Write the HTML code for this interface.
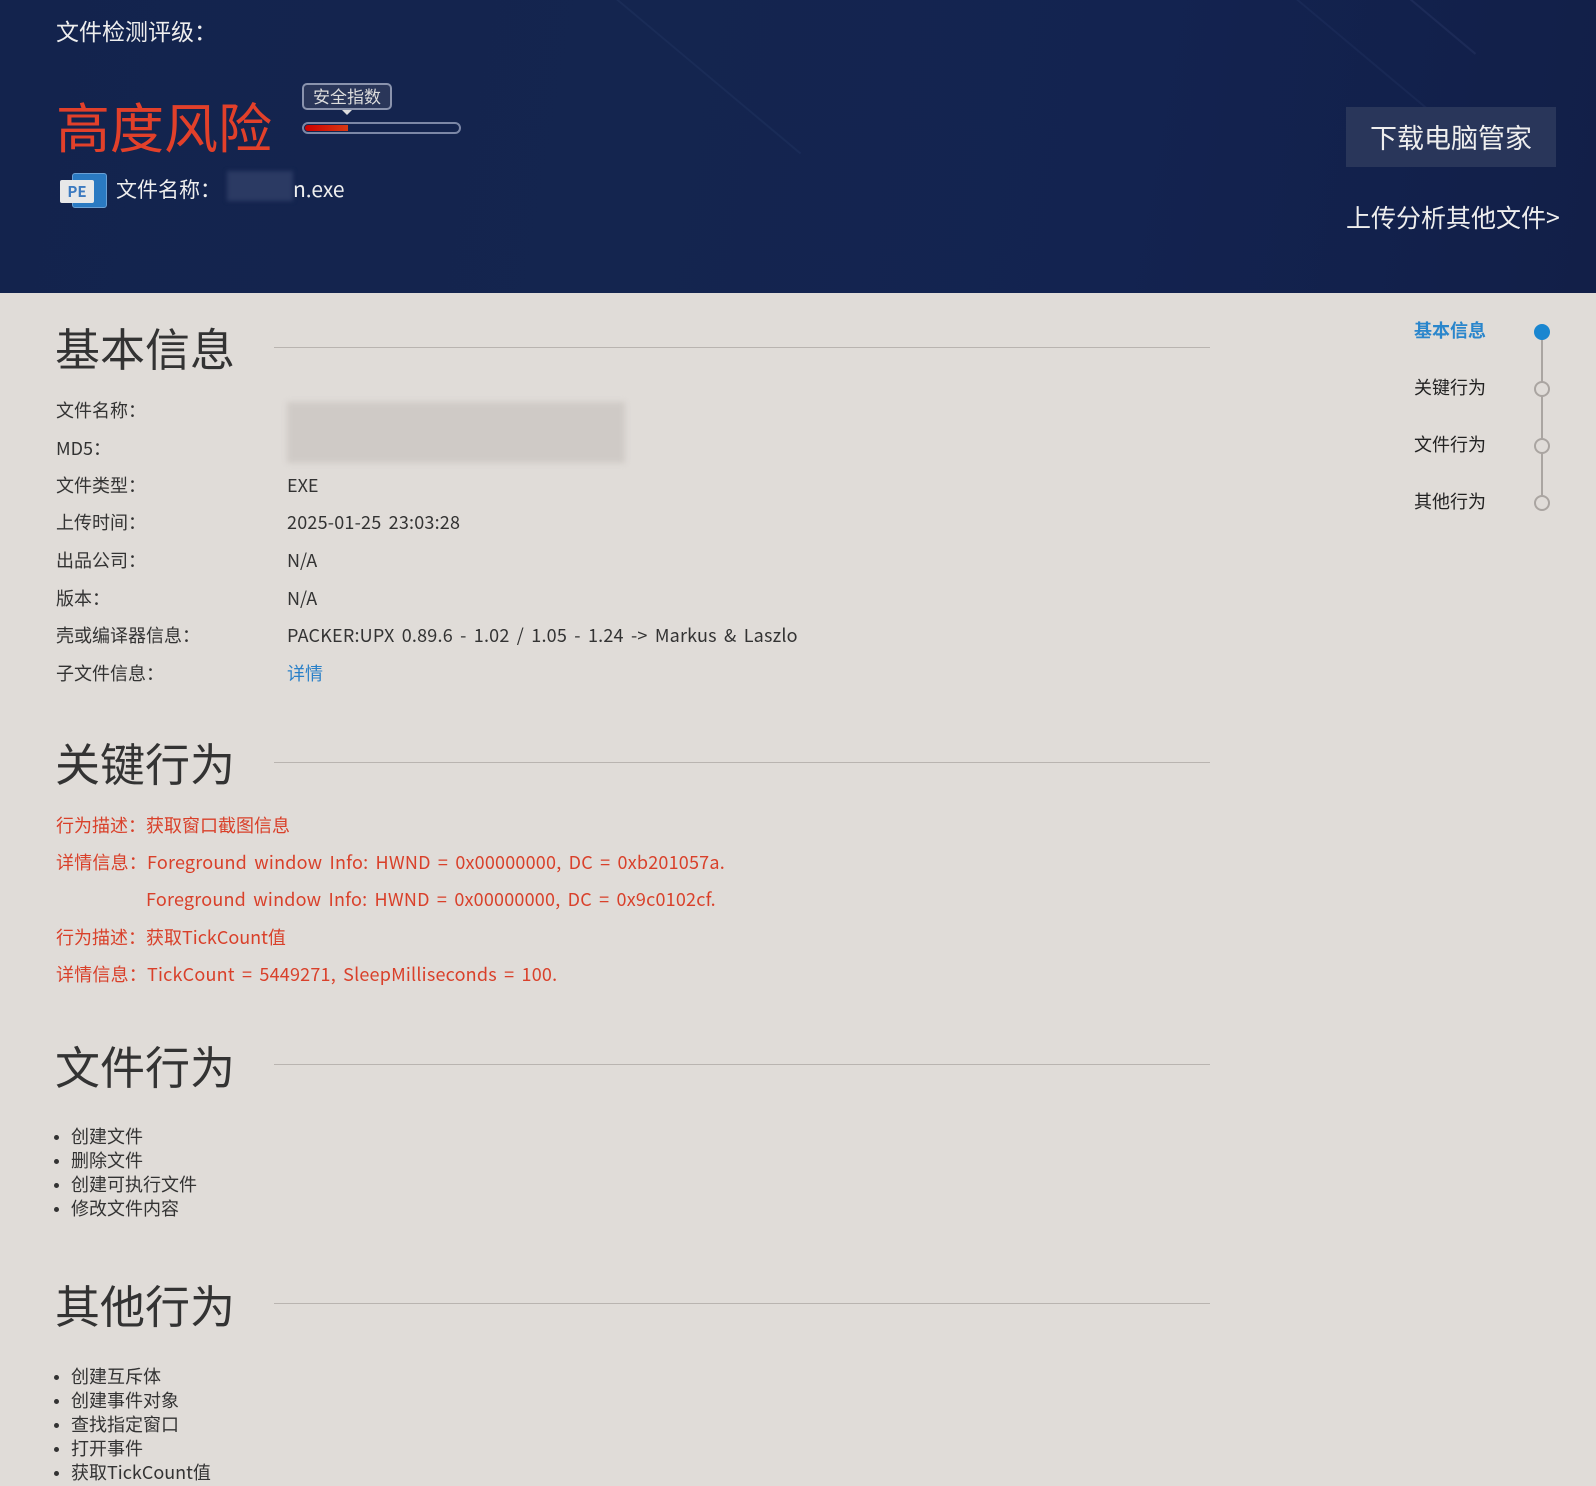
<!DOCTYPE html>
<html><head><meta charset="utf-8"><style>
*{margin:0;padding:0;box-sizing:border-box}
body{width:1596px;height:1486px;overflow:hidden;background:#e0dcd8;font-family:"Noto Sans CJK SC","Liberation Sans",sans-serif;color:#333;position:relative}
.a{position:absolute;white-space:nowrap;line-height:1}
#hd{position:absolute;left:0;top:0;width:1596px;height:293px;background:linear-gradient(100deg,#13234d 0%,#14254f 40%,#132350 70%,#121f48 100%);overflow:hidden}
.h2{font-size:45px;color:#333}
.ln{position:absolute;left:274px;width:936px;height:1px;background:#b9b4b0}
.r{font-size:18px;color:#333}
.red{color:#d9402a;font-size:18px}
.ws{word-spacing:3px;letter-spacing:0.2px}
ul{position:absolute;left:52px;list-style:none;font-size:18px;color:#333}
ul li{height:24px;line-height:24px;padding-left:19px;position:relative}
ul li:before{content:"";position:absolute;left:2px;top:11px;width:5px;height:5px;border-radius:50%;background:#333}
.dot{position:absolute;left:1534px;width:16px;height:16px;border-radius:50%;border:2px solid #aaa5a1;background:#e0dcd8}
</style></head><body>
<div id="hd">
<div class="a" style="left:700px;top:-60px;width:2px;height:260px;background:rgba(120,140,200,.07);transform:rotate(-50deg)"></div>
<div class="a" style="left:1380px;top:-80px;width:2px;height:300px;background:rgba(120,140,200,.07);transform:rotate(-50deg)"></div>
<div class="a" style="left:1440px;top:-20px;width:2px;height:90px;background:rgba(120,140,200,.1);transform:rotate(-50deg)"></div>
<div class="a" style="left:56px;top:19px;font-size:23px;color:#eee">文件检测评级：</div>
<div class="a" style="left:56px;top:98px;font-size:54px;color:#e2402a">高度风险</div>
<div class="a" style="left:302px;top:83px;width:90px;height:27px;border:2px solid #8a93ad;border-radius:5px;background:#2a3659;color:#ddd;font-size:17px;line-height:22px;text-align:center">安全指数</div>
<div class="a" style="left:342px;top:110px;width:0;height:0;border-left:5px solid transparent;border-right:5px solid transparent;border-top:5px solid #ddd"></div>
<div class="a" style="left:302px;top:122px;width:159px;height:12px;border:2px solid #7c87a6;border-radius:6px"></div>
<div class="a" style="left:305px;top:125px;width:43px;height:6px;background:linear-gradient(90deg,#c00,#d83a14);border-radius:3px 0 0 3px"></div>
<div class="a" style="left:72px;top:173px;width:35px;height:35px;background:#2a7ac2;border:1px solid #6aa0d5;border-radius:3px"></div>
<div class="a" style="left:60px;top:180px;width:34px;height:23px;background:#e8e8e8;border-radius:2px;color:#3c7ac0;font-weight:bold;font-size:15px;line-height:23px;text-align:center">PE</div>
<div class="a" style="left:116px;top:179px;font-size:21px;color:#eee">文件名称：</div>
<div class="a" style="left:227px;top:171px;width:66px;height:30px;background:#2b3a63;filter:blur(2px)"></div>
<div class="a" style="left:293px;top:179px;font-size:21px;color:#eee">n.exe</div>
<div class="a" style="left:1346px;top:107px;width:210px;height:60px;background:#29365a;color:#eee;font-size:27px;line-height:60px;text-align:center">下载电脑管家</div>
<div class="a" style="left:1346px;top:205px;font-size:25px;color:#eee">上传分析其他文件&gt;</div>
</div>

<div class="a h2" style="left:55px;top:324px">基本信息</div>
<div class="ln" style="top:347px"></div>
<div class="a r" style="left:56px;top:401px">文件名称：</div>
<div class="a r" style="left:56px;top:439px">MD5：</div>
<div class="a r" style="left:56px;top:476px">文件类型：</div>
<div class="a r" style="left:56px;top:513px">上传时间：</div>
<div class="a r" style="left:56px;top:551px">出品公司：</div>
<div class="a r" style="left:56px;top:589px">版本：</div>
<div class="a r" style="left:56px;top:626px">壳或编译器信息：</div>
<div class="a r" style="left:56px;top:664px">子文件信息：</div>
<div class="a" style="left:287px;top:402px;width:338px;height:61px;background:#cfcac6;filter:blur(3px)"></div>
<div class="a r" style="left:287px;top:476px">EXE</div>
<div class="a r ws" style="left:287px;top:513px">2025-01-25 23:03:28</div>
<div class="a r" style="left:287px;top:551px">N/A</div>
<div class="a r" style="left:287px;top:589px">N/A</div>
<div class="a r ws" style="left:287px;top:626px">PACKER:UPX 0.89.6 - 1.02 / 1.05 - 1.24 -&gt; Markus &amp; Laszlo</div>
<div class="a r" style="left:287px;top:664px;color:#2a80c8">详情</div>

<div class="a h2" style="left:55px;top:739px">关键行为</div>
<div class="ln" style="top:762px"></div>
<div class="a red" style="left:56px;top:816px">行为描述：获取窗口截图信息</div>
<div class="a red ws" style="left:56px;top:853px">详情信息：Foreground window Info: HWND = 0x00000000, DC = 0xb201057a.</div>
<div class="a red ws" style="left:146px;top:890px">Foreground window Info: HWND = 0x00000000, DC = 0x9c0102cf.</div>
<div class="a red" style="left:56px;top:928px">行为描述：获取TickCount值</div>
<div class="a red ws" style="left:56px;top:965px">详情信息：TickCount = 5449271, SleepMilliseconds = 100.</div>

<div class="a h2" style="left:55px;top:1042px">文件行为</div>
<div class="ln" style="top:1064px"></div>
<ul style="top:1124px"><li>创建文件</li><li>删除文件</li><li>创建可执行文件</li><li>修改文件内容</li></ul>

<div class="a h2" style="left:55px;top:1281px">其他行为</div>
<div class="ln" style="top:1303px"></div>
<ul style="top:1364px"><li>创建互斥体</li><li>创建事件对象</li><li>查找指定窗口</li><li>打开事件</li><li>获取TickCount值</li></ul>

<div class="a" style="left:1541px;top:332px;width:2px;height:170px;background:#aaa5a1"></div>
<div class="dot" style="top:324px;background:#1a86d0;border-color:#1a86d0"></div>
<div class="dot" style="top:381px"></div>
<div class="dot" style="top:438px"></div>
<div class="dot" style="top:495px"></div>
<div class="a" style="left:1414px;top:321px;font-size:18px;color:#2a86cc;font-weight:bold">基本信息</div>
<div class="a" style="left:1414px;top:378px;font-size:18px;color:#222">关键行为</div>
<div class="a" style="left:1414px;top:435px;font-size:18px;color:#222">文件行为</div>
<div class="a" style="left:1414px;top:492px;font-size:18px;color:#222">其他行为</div>
</body></html>
